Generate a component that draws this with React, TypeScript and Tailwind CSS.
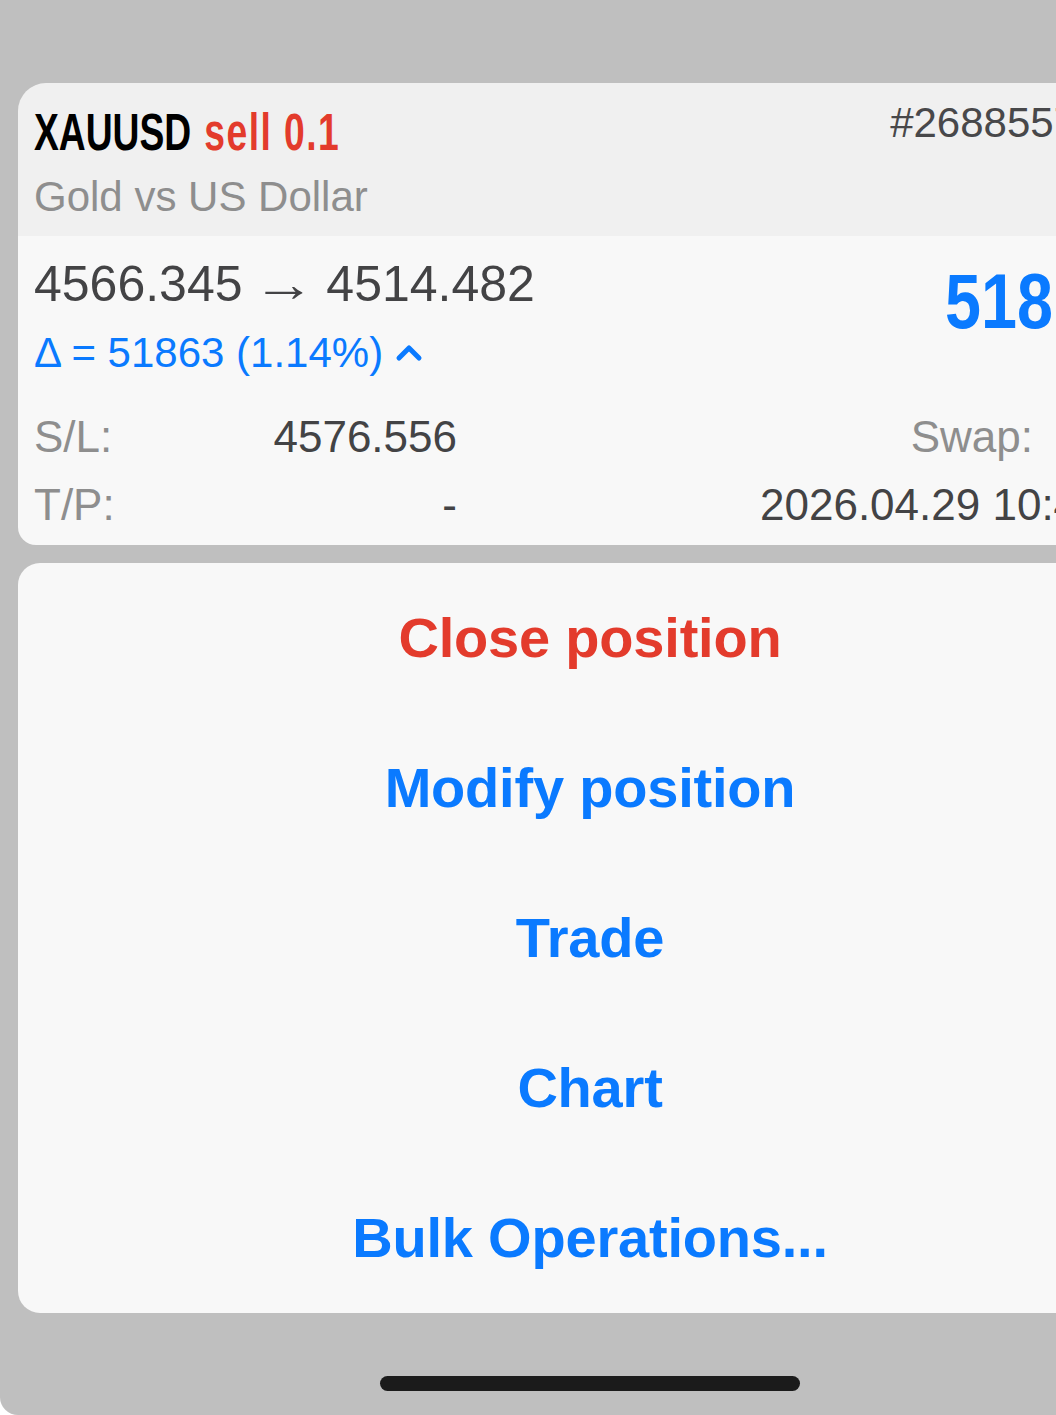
import React from "react";

const sans = { fontFamily: '"Liberation Sans", Arial, sans-serif' };

function ChevronUp() {
  return (
    <svg width="28" height="20" viewBox="0 0 28 20" className="ml-[12px] mb-[2px] shrink-0">
      <polyline
        points="4,16 14,6 24,16"
        fill="none"
        stroke="#0a7aff"
        strokeWidth="5"
        strokeLinecap="round"
        strokeLinejoin="round"
      />
    </svg>
  );
}

const actions = [
  { label: "Close position", color: "text-[#e33b2c]" },
  { label: "Modify position", color: "text-[#0a7aff]" },
  { label: "Trade", color: "text-[#0a7aff]" },
  { label: "Chart", color: "text-[#0a7aff]" },
  { label: "Bulk Operations...", color: "text-[#0a7aff]" },
];

export default function App() {
  return (
    <div
      className="w-[1056px] h-[1415px] overflow-hidden bg-[#bfbfbf] flex flex-col rounded-bl-[18px]"
      style={sans}
    >
      {/* position card */}
      <div className="ml-[18px] mt-[83px] w-[1120px] shrink-0 rounded-tl-[28px] rounded-bl-[18px] overflow-hidden">
        <div className="bg-[#f0f0f0] h-[153px] flex pl-[16px]">
          <div className="flex flex-col pt-[22px] shrink-0">
            <div className="text-[51px] leading-[56px] font-bold whitespace-nowrap origin-left scale-x-[0.73]">
              <span className="text-black">XAUUSD</span>
              <span className="text-[#e33b2c] ml-[18px] tracking-[2px]">sell 0.1</span>
            </div>
            <div className="mt-[8px] text-[42px] leading-[56px] text-[#8e8e8e] whitespace-nowrap">Gold vs US Dollar</div>
          </div>
          <div className="ml-auto mr-[61px] pt-[16px] text-[42px] leading-[48px] text-[#48484a] whitespace-nowrap">#2688557</div>
        </div>

        <div className="bg-[#f8f8f8] pl-[16px] pt-[18px] pb-[6px]">
          <div className="flex">
            <div className="flex flex-col w-[911px] shrink-0">
              <div className="text-[50px] leading-[60px] text-[#434345] whitespace-nowrap">
                4566.345 <span className="inline-block mx-[3px] scale-x-[1.25]">→</span> 4514.482
              </div>
              <div className="mt-[11px] text-[42px] leading-[56px] text-[#0a7aff] flex items-center whitespace-nowrap">
                <span>Δ = 51863 (1.14%)</span>
                <ChevronUp />
              </div>
            </div>
            <div className="mt-[7px] text-[77px] leading-[80px] font-bold text-[#0a7aff] whitespace-nowrap origin-left scale-x-[0.84]">
              518.63
            </div>
          </div>

          <div className="mt-[22px] flex text-[44px] leading-[68px] whitespace-nowrap">
            <div className="w-[423px] shrink-0 flex justify-between">
              <span className="text-[#8e8e8e]">S/L:</span>
              <span className="text-[#434345]">4576.556</span>
            </div>
            <div className="w-[576px] shrink-0 text-right text-[#8e8e8e]">Swap:</div>
            <div className="ml-[40px] shrink-0 text-[#434345]">0.00</div>
          </div>
          <div className="flex text-[44px] leading-[68px] whitespace-nowrap">
            <div className="w-[423px] shrink-0 flex justify-between">
              <span className="text-[#8e8e8e]">T/P:</span>
              <span className="text-[#434345]">-</span>
            </div>
            <div className="ml-[303px] shrink-0 text-[#434345]">2026.04.29 10:41:27</div>
          </div>
        </div>
      </div>

      {/* action sheet */}
      <div className="ml-[18px] mt-[18px] w-[1144px] shrink-0 bg-[#f8f8f8] rounded-tl-[22px] rounded-bl-[22px] flex flex-col">
        {actions.map((a) => (
          <div
            key={a.label}
            className={`h-[150px] flex items-center justify-center text-[56px] font-bold tracking-[-0.2px] ${a.color}`}
          >
            {a.label}
          </div>
        ))}
      </div>

      {/* home indicator */}
      <div className="mt-[63px] ml-[380px] w-[420px] h-[15px] rounded-full bg-[#1b1b1b] shrink-0" />
    </div>
  );
}
